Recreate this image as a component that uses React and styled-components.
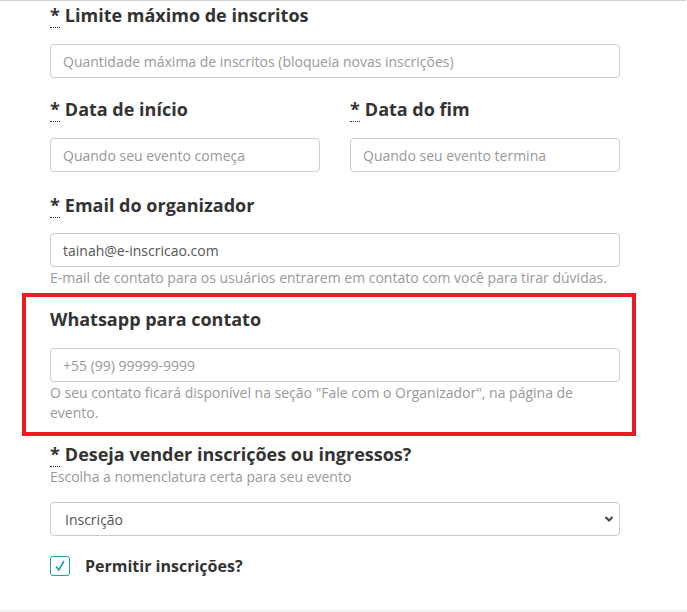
import React from 'react';
import styled, { createGlobalStyle } from 'styled-components';

const GlobalStyle = createGlobalStyle`
  body {
    margin: 0;
    background: #fff;
    font-family: 'Open Sans', 'Liberation Sans', sans-serif;
    color: #333;
  }
`;

const Page = styled.div`
  width: 687px;
  height: 612px;
  display: flex;
  flex-direction: column;
  overflow: hidden;
`;

const TopRule = styled.div`
  height: 2px;
  border-top: 1px solid #d0d0d0;
  margin-right: 1px;
`;

const Form = styled.div`
  flex: 1;
  width: 570px;
  padding-left: 50px;
  display: flex;
  flex-direction: column;
`;

const Group = styled.div`
  margin-bottom: ${(p) => p.$mb || 19}px;
`;

const Row = styled.div`
  display: flex;
  gap: 30px;
  & > * {
    flex: 1;
  }
`;

const Label = styled.div`
  font-size: 18px;
  font-weight: 700;
  line-height: 25px;
  color: #333;
  margin-bottom: ${(p) => p.$mb ?? 16}px;
`;

const Req = styled.abbr`
  text-decoration: none;
  border-bottom: 1px dotted #333;
  cursor: help;
  margin-right: 5px;
`;

const Input = styled.input`
  box-sizing: border-box;
  width: 100%;
  height: 34px;
  border: 1px solid #ccc;
  border-radius: 4px;
  padding: 0 12px;
  font-family: inherit;
  font-size: 14px;
  color: #555;
  background: #fff;
  &::placeholder {
    color: #999;
  }
  &:focus {
    outline: none;
  }
`;

const Help = styled.div`
  font-size: 14px;
  line-height: 20px;
  color: #999;
  margin-top: ${(p) => p.$mt ?? 1}px;
`;

const Highlight = styled.div`
  margin: -1px -16px 6px -28px;
  padding: 10px 12px 9px 24px;
  border: 4px solid #ed1c24;
`;

const SelectWrap = styled.div`
  position: relative;
  height: 34px;
  margin-top: 15px;
`;

const Select = styled.select`
  box-sizing: border-box;
  width: 100%;
  height: 34px;
  border: 1px solid #ccc;
  border-radius: 4px;
  padding: 0 14px;
  font-family: inherit;
  font-size: 14px;
  color: #555;
  background: #fff;
  appearance: none;
  &:focus {
    outline: none;
  }
`;

const Chevron = styled.svg`
  position: absolute;
  right: 6px;
  top: 13px;
  pointer-events: none;
`;

const CheckRow = styled.label`
  display: flex;
  align-items: center;
  gap: 15px;
  margin-top: 19px;
`;

const Box = styled.span`
  box-sizing: border-box;
  width: 20px;
  height: 20px;
  border: 1.5px solid #1aa3a3;
  border-radius: 3px;
  display: flex;
  align-items: center;
  justify-content: center;
`;

const CheckText = styled.span`
  font-size: 16px;
  font-weight: 700;
  color: #333;
`;

const Bottom = styled.div`
  height: 2px;
  background: #f0f0f0;
`;

export default function App() {
  return (
    <Page>
      <GlobalStyle />
      <TopRule />
      <Form>
        <Group>
          <Label>
            <Req title="obrigatório">*</Req>Limite máximo de inscritos
          </Label>
          <Input placeholder="Quantidade máxima de inscritos (bloqueia novas inscrições)" />
        </Group>
        <Group $mb={21}>
          <Row>
            <div>
              <Label>
                <Req title="obrigatório">*</Req>Data de início
              </Label>
              <Input placeholder="Quando seu evento começa" />
            </div>
            <div>
              <Label>
                <Req title="obrigatório">*</Req>Data do fim
              </Label>
              <Input placeholder="Quando seu evento termina" />
            </div>
          </Row>
        </Group>
        <Group $mb={6}>
          <Label $mb={15}>
            <Req title="obrigatório">*</Req>Email do organizador
          </Label>
          <Input defaultValue="tainah@e-inscricao.com" />
          <Help>E-mail de contato para os usuários entrarem em contato com você para tirar dúvidas.</Help>
        </Group>
        <Highlight>
          <Label $mb={16}>Whatsapp para contato</Label>
          <Input placeholder="+55 (99) 99999-9999" />
          <Help>
            O seu contato ficará disponível na seção "Fale com o Organizador", na página de evento.
          </Help>
        </Highlight>
        <Group>
          <Label $mb={0}>
            <Req title="obrigatório">*</Req>Deseja vender inscrições ou ingressos?
          </Label>
          <Help $mt={0}>Escolha a nomenclatura certa para seu evento</Help>
          <SelectWrap>
            <Select defaultValue="inscricao">
              <option value="inscricao">Inscrição</option>
              <option value="ingresso">Ingresso</option>
            </Select>
            <Chevron width="10" height="8" viewBox="0 0 10 8">
              <path d="M1.5 2 L5 5.5 L8.5 2" fill="none" stroke="#444" strokeWidth="2" />
            </Chevron>
          </SelectWrap>
          <CheckRow>
            <Box>
              <svg width="14" height="14" viewBox="0 0 14 14">
                <path d="M3 7.5 L5.8 11 L11 2" fill="none" stroke="#1aa3a3" strokeWidth="1.6" />
              </svg>
            </Box>
            <CheckText>Permitir inscrições?</CheckText>
          </CheckRow>
        </Group>
      </Form>
      <Bottom />
    </Page>
  );
}
